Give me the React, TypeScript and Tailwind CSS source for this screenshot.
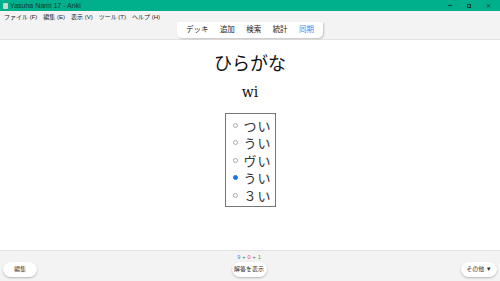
import React from 'react';

const menus = ['ファイル (F)', '編集 (E)', '表示 (V)', 'ツール (T)', 'ヘルプ (H)'];
const tabs = ['デッキ', '追加', '検索', '統計', '同期'];
const options = [
  { label: 'つい', checked: false },
  { label: 'うい', checked: false },
  { label: 'ヴい', checked: false },
  { label: 'うい', checked: true },
  { label: '３い', checked: false },
];

const jp = '"Liberation Sans", "Noto Sans CJK JP", sans-serif';

const Pill: React.FC<{ children: React.ReactNode; className?: string }> = ({ children, className = '' }) => (
  <div
    className={`h-[15px] flex items-center justify-center rounded-full bg-white text-[6px] text-[#333] shadow-[0_1px_2px_rgba(0,0,0,0.25)] ${className}`}
  >
    {children}
  </div>
);

export default function App() {
  return (
    <div className="w-[500px] h-[281px] flex flex-col bg-white overflow-hidden" style={{ fontFamily: jp }}>
      {/* Title bar */}
      <div className="h-[11px] bg-[#00b08d] flex items-center justify-between px-[3px]">
        <div className="flex items-center gap-[2px]">
          <div className="w-[5px] h-[6px] rounded-[1px] bg-[#c8d8d2]" />
          <span className="text-[7px] leading-none text-[#0d3a30]">Yasuha Nami 17 - Anki</span>
        </div>
        <div className="flex items-center gap-[15px] pr-[6px] text-[#0d3a30]">
          <div className="w-[4px] h-px bg-[#0d3a30]" />
          <div className="w-[4px] h-[4px] border border-[#0d3a30]" />
          <span className="text-[6px] leading-none">✕</span>
        </div>
      </div>

      {/* Menu bar */}
      <div className="h-[11px] bg-[#f3f3f3] flex items-center gap-[6px] px-[4px]">
        {menus.map((m) => (
          <span key={m} className="text-[6px] leading-none text-[#222]">{m}</span>
        ))}
      </div>

      {/* Toolbar */}
      <div className="h-[18px] bg-[#f3f3f3] flex justify-center border-b border-[#e4e4e4]">
        <div className="w-[146px] h-[16px] bg-white rounded-b-[5px] shadow-[1px_1px_2px_rgba(0,0,0,0.2)] flex items-center justify-between px-[9px]">
          {tabs.map((t, i) => (
            <span
              key={t}
              className={`text-[7.5px] leading-none ${i === 4 ? 'text-[#4b7ff0]' : 'text-[#222]'}`}
            >
              {t}
            </span>
          ))}
        </div>
      </div>

      {/* Card */}
      <div className="flex-1 flex flex-col items-center">
        <div
          className="mt-[12px] text-[18px] leading-[24px] text-[#111]"
          style={{ fontFamily: '"Liberation Serif", "Noto Sans CJK JP", serif' }}
        >
          ひらがな
        </div>
        <div
          className="mt-[7px] text-[14px] leading-[18px] text-[#111]"
          style={{ fontFamily: '"DejaVu Serif", serif' }}
        >
          wi
        </div>
        <div className="mt-[12px] w-[51px] h-[94px] border border-[#777] flex flex-col justify-center gap-[3px] pl-[7px]">
          {options.map((o, i) => (
            <div key={i} className="h-[14.5px] flex items-center gap-[6px]">
              <div
                className={`w-[5px] h-[5px] rounded-full border ${
                  o.checked ? 'bg-[#1a73e8] border-[#1a73e8]' : 'border-[#aaa] bg-white'
                }`}
              />
              <span
                className="text-[13px] leading-none text-[#333] tracking-[1px]"
                style={{ fontFamily: '"Noto Sans CJK JP", sans-serif' }}
              >
                {o.label}
              </span>
            </div>
          ))}
        </div>
      </div>

      {/* Bottom bar */}
      <div className="h-[31px] bg-[#f3f3f3] border-t border-[#e2e2e2] flex items-end justify-between px-[3px] pb-[4px]">
        <Pill className="w-[34px]">編集</Pill>
        <div className="flex flex-col items-center gap-[1px]">
          <div className="text-[5.5px] leading-[7px] flex gap-[2px]">
            <span className="text-[#3b82f6]">9</span>
            <span className="text-[#666]">+</span>
            <span className="text-[#ef4444]">0</span>
            <span className="text-[#666]">+</span>
            <span className="text-[#16a34a]">1</span>
          </div>
          <Pill className="w-[35px]">解答を表示</Pill>
        </div>
        <Pill className="w-[36px]">その他 ▼</Pill>
      </div>
    </div>
  );
}
